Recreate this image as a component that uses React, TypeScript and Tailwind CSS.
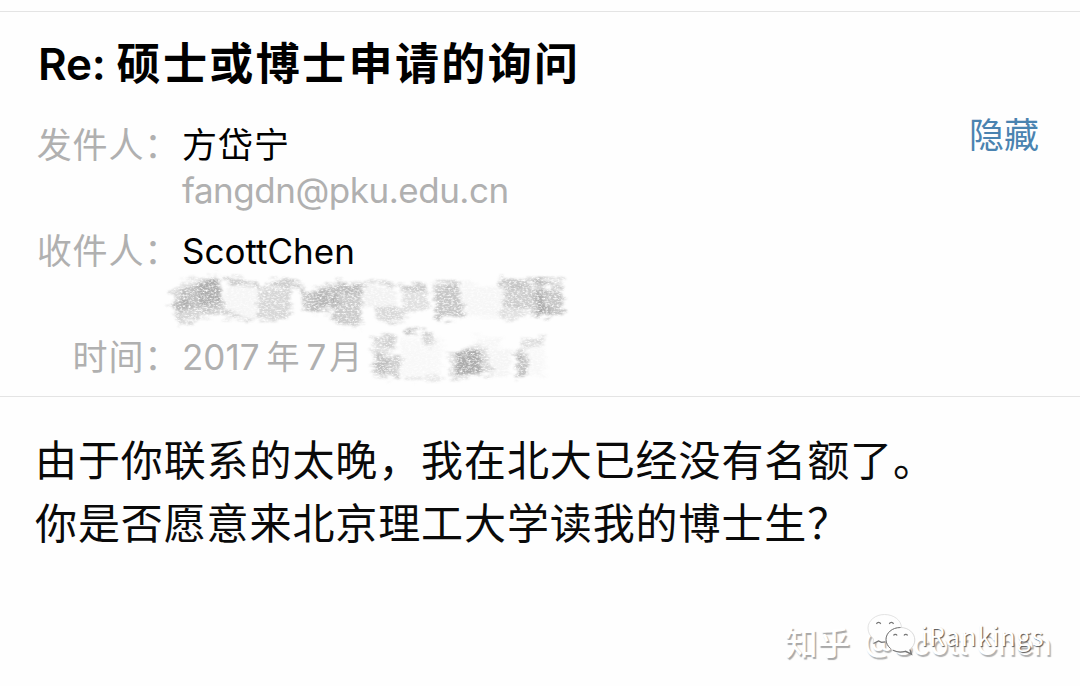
const hatches = [
  // [x, y, width, height, tilt, opacity]
  [174, 285, 48, 34, -14, 0.36],
  [182, 278, 38, 30, -8, 0.28],
  [198, 281, 23, 22, -6, 0.36],
  [171, 299, 18, 12, -35, 0.36],
  [224, 282, 34, 34, 10, 0.07],
  [224, 279, 34, 6, 9, 0.4],
  [222, 314, 30, 5, 9, 0.34],
  [258, 289, 32, 30, 3, 0.34],
  [265, 284, 3, 3, 0, 0.6],
  [272, 281, 30, 7, 5, 0.42],
  [302, 287, 36, 22, -6, 0.48],
  [312, 292, 18, 20, -2, 0.26],
  [334, 282, 28, 43, 5, 0.44],
  [340, 284, 22, 10, 3, 0.24],
  [366, 281, 30, 4, 2, 0.34],
  [364, 287, 32, 22, 3, 0.1],
  [376, 307, 29, 14, 4, 0.32],
  [400, 285, 24, 6, -5, 0.46],
  [403, 290, 25, 21, -5, 0.26],
  [432, 281, 27, 9, -6, 0.38],
  [435, 289, 26, 30, -6, 0.48],
  [461, 285, 44, 31, 3, 0.07],
  [499, 279, 35, 9, 3, 0.46],
  [504, 287, 32, 22, 3, 0.42],
  [500, 308, 26, 11, -4, 0.24],
  [534, 279, 28, 5, 2, 0.4],
  [536, 290, 28, 26, -2, 0.48],
  [537, 280, 7, 34, 0, 0.4],
  [530, 306, 22, 9, 4, 0.3],
  [372, 335, 24, 10, -4, 0.34],
  [369, 345, 26, 9, -24, 0.24],
  [374, 354, 26, 24, 6, 0.4],
  [378, 358, 10, 14, 4, 0.24],
  [400, 337, 42, 42, 3, 0.05],
  [404, 330, 27, 4, 5, 0.5],
  [423, 335, 11, 10, 10, 0.3],
  [404, 377, 38, 3, 3, 0.18],
  [450, 349, 40, 28, -8, 0.28],
  [456, 352, 25, 23, -3, 0.6],
  [474, 337, 26, 10, 3, 0.06],
  [484, 350, 26, 26, 3, 0.08],
  [514, 352, 10, 6, 4, 0.46],
  [517, 356, 11, 22, 4, 0.5],
  [521, 339, 24, 6, -8, 0.32],
  [525, 346, 20, 30, 3, 0.05],
];

export default function App() {
  return (
    <div className="relative flex h-[686px] w-[1080px] flex-col overflow-hidden bg-[#fefefe] font-['Inter','Noto_Sans_CJK_SC',sans-serif] text-black">
      <header className="mt-[11px] flex h-[386px] flex-col border-y border-[#e4e4e4] pl-[38px]">
        <h1 className="mt-[20px] h-[64px] whitespace-pre text-[44px] leading-[64px] font-semibold">
          <span className="tracking-[-0.2px]">Re: </span>
          <span className="tracking-[2.4px]">硕士或博士申请的询问</span>
        </h1>

        <div className="mt-[26px] flex h-[46px] items-center text-[35px] leading-[46px]">
          <Label>发件人：</Label>
          <span className="tracking-[1px]">方岱宁</span>
          <button className="relative -top-[10px] mr-[41px] ml-auto text-[35px] leading-[46px] text-[#4a83b0]">
            隐藏
          </button>
        </div>
        <Email>fangdn@pku.edu.cn</Email>

        <div className="mt-[14px] flex h-[46px] items-center text-[35px] leading-[46px]">
          <Label>收件人：</Label>
          <span>ScottChen</span>
        </div>

        <div className="mt-[60px] flex h-[46px] items-center text-[35px] leading-[46px]">
          <Label>时间：</Label>
          <div className="flex text-[#b0b0b0]">
            <span>2017</span>
            <span className="ml-[7px] text-[33px]">年</span>
            <span className="ml-[7px]">7</span>
            <span className="ml-[3px] text-[33px]">月</span>
          </div>
        </div>
      </header>

      <main className="mt-[32px] pl-[35px] text-[42px] leading-[63px] tracking-[0.9px] text-[#0a0a0a]">
        <p>由于你联系的太晚，我在北大已经没有名额了。</p>
        <p>你是否愿意来北京理工大学读我的博士生？</p>
      </main>

      <Scribbles />
      <Watermark />
    </div>
  );
}

function Label({ children }: { children: string }) {
  return (
    <span className="mr-[2px] -ml-[2px] w-[144px] shrink-0 text-right tracking-[0.8px] whitespace-nowrap text-[#b0b0b0]">
      {children}
    </span>
  );
}

function Email({ children }: { children: string }) {
  return (
    <p className="ml-[144px] h-[46px] text-[35px] leading-[44px] tracking-[-0.48px] text-[#b0b0b0]">
      {children}
    </p>
  );
}

/* Pencil marks that cover the private parts of the header */
function Scribbles() {
  return (
    <svg
      className="pointer-events-none absolute inset-0"
      width="1080"
      height="686"
      aria-hidden="true"
    >
      <defs>
        <filter
          id="pencil"
          x="-5%"
          y="-20%"
          width="110%"
          height="140%"
          colorInterpolationFilters="sRGB"
        >
          <feTurbulence type="fractalNoise" baseFrequency="0.05 0.4" numOctaves="3" seed="4" result="noise" />
          <feTurbulence type="fractalNoise" baseFrequency="0.35 0.6" numOctaves="3" seed="9" result="fine" />
          <feDisplacementMap
            in="SourceGraphic"
            in2="noise"
            scale="16"
            xChannelSelector="R"
            yChannelSelector="G"
            result="rough"
          />
          <feGaussianBlur in="rough" stdDeviation="0.9" result="soft" />
          <feColorMatrix in="fine" values="0 0 0 0 0  0 0 0 0 0  0 0 0 0 0  0 0 2.4 0 -0.35" result="grain" />
          <feComposite in="soft" in2="grain" operator="in" />
          <feGaussianBlur stdDeviation="0.35" />
        </filter>
      </defs>
      <g filter="url(#pencil)">
        {hatches.map(([x, y, w, h, tilt, opacity], i) => (
          <rect
            key={i}
            x={x}
            y={y}
            width={w}
            height={h}
            fill="#8c8c8c"
            opacity={opacity}
            transform={`rotate(${tilt} ${x + w / 2} ${y + h / 2})`}
          />
        ))}
      </g>
    </svg>
  );
}

function Watermark() {
  return (
    <div className="pointer-events-none absolute inset-0">
      <span className="absolute top-[622px] left-[785px] text-[32.5px] leading-[44px] font-medium whitespace-pre text-white [text-shadow:1.5px_1.5px_1px_#a8a8a8]">
        知乎
      </span>
      <span className="absolute top-[622px] left-[864px] text-[30px] leading-[44px] font-medium whitespace-pre text-white [text-shadow:1.5px_1.5px_1px_#b0b0b0]">
        @Scott Chen
      </span>
      <svg
        className="absolute top-[610px] left-[864px]"
        width="56"
        height="48"
        viewBox="0 0 56 48"
        aria-hidden="true"
      >
        <path
          d="M20.500 4.500C11.500 4.500 4 10.500 4 18c0 4.500 2 8 5.500 10.800L9 34l5-2.800c2.200.7 4.300 1 6.500.8 9 0 17-6 17-14s-8-13.500-17-13.500z"
          fill="#fefefe"
          stroke="#dcdcdc"
          strokeWidth=".8"
        />
        <path d="M9.500 33.500l5-2.500 3 1.300 4-.5" fill="none" stroke="#777" strokeWidth="1.200" />
        <path
          d="M36.500 17.500c-8.500 0-14.500 5.500-14.500 12S28 42 36.500 42c1.800 0 3.500-.2 5-.7l6 2.900-1.600-4.700c3-2.400 4.900-5.700 4.900-9.500 0-7-6.300-12.500-14.300-12.500z"
          fill="#fefefe"
          stroke="#d0d0d0"
          strokeWidth=".8"
        />
        <g fill="none" stroke="#777">
          <path d="M36.500 17.500c-8.500 0-14.500 5.500-14.500 12 0 3.500 1.800 6.800 4.600 9" strokeWidth="1" />
          <path d="M29 40.300c3.500 1.900 8 2.200 12.500 1l6 2.900-1.600-4.700" strokeWidth="1.300" />
          <path d="M12.500 14a2.200 2.200 0 0 1 4.200 0M25.300 14a2.200 2.200 0 0 1 4.200 0M29.500 25.500a2 2 0 0 1 3.600 0M40 25.500a2 2 0 0 1 3.600 0" strokeWidth="1.200" />
        </g>
      </svg>
      <span className="absolute top-[617px] left-[921px] font-['Noto_Sans_CJK_SC',sans-serif] text-[25px] leading-[36px] tracking-[1.1px] text-white [text-shadow:1px_1px_1px_#555]">
        iRankings
      </span>
    </div>
  );
}
